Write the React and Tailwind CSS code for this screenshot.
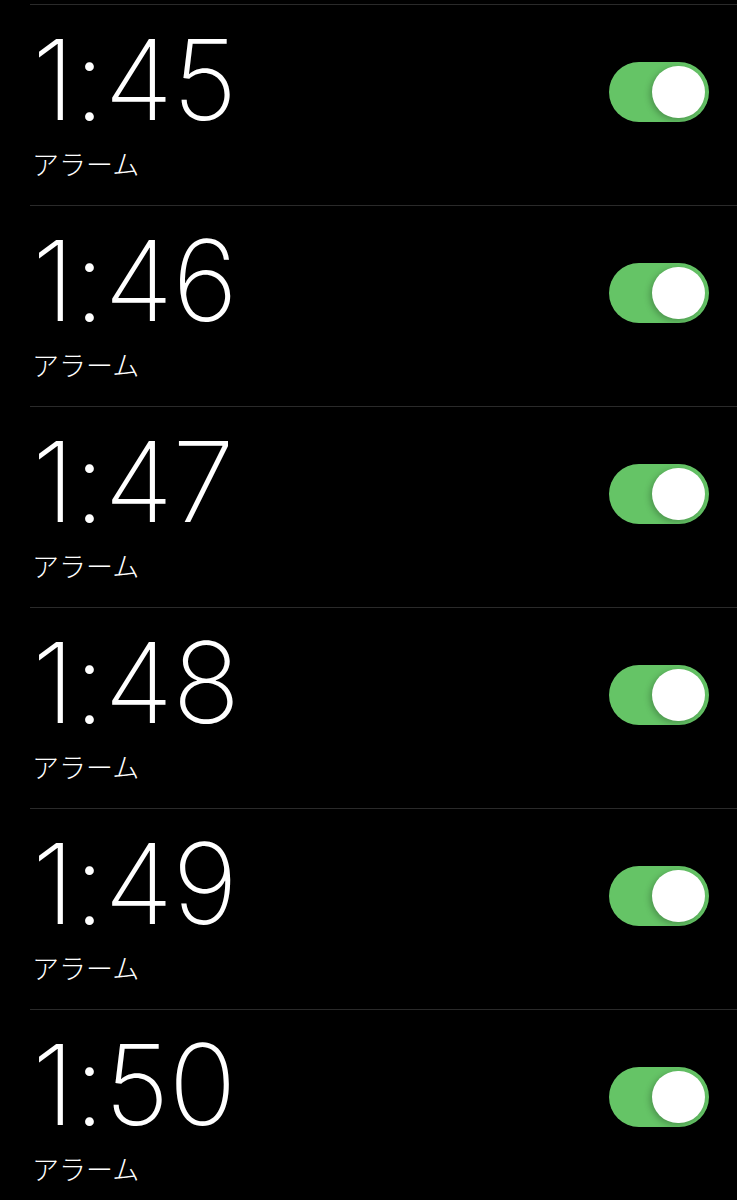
const alarms = ['1:45', '1:46', '1:47', '1:48', '1:49', '1:50'];

const Toggle = () => (
    <div className="relative w-[100px] h-[60px] rounded-full bg-[#65c466] shrink-0">
        <div className="absolute right-[4px] top-[4px] w-[53px] h-[52px] rounded-full bg-white shadow-[-2px_2px_6px_rgba(0,0,0,0.25)]" />
    </div>
);

const AlarmRow = ({ time }) => (
    <div className="ml-[30px] h-[201px] border-t border-[#2a2a2a] flex items-start justify-between pr-[28px]">
        <div className="flex flex-col pl-[2px]">
            <span className="block text-white font-extralight text-[112px] leading-[84px] mt-[32px] tracking-[-0.5px]" style={{ fontFamily: 'Inter, "Noto Sans", sans-serif' }}>
                {time}
            </span>
            <span className="block text-white font-light text-[27px] leading-none mt-[29px]" style={{ fontFamily: '"Noto Sans CJK JP", sans-serif' }}>
                アラーム
            </span>
        </div>
        <div className="mt-[57px]">
            <Toggle />
        </div>
    </div>
);

export default function App() {
    return (
        <div className="w-[737px] h-[1200px] bg-black overflow-hidden pt-[4px]">
            {alarms.map(t => (
                <AlarmRow key={t} time={t} />
            ))}
        </div>
    );
}
